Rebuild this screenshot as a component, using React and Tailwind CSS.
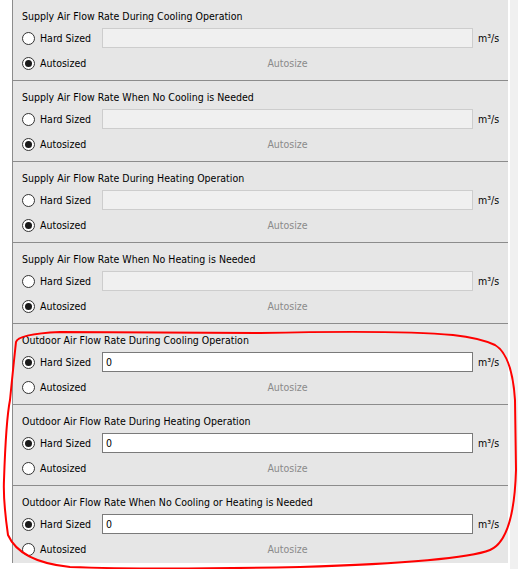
import React from "react";

const sections = [
  { title: "Supply Air Flow Rate During Cooling Operation", hard: false },
  { title: "Supply Air Flow Rate When No Cooling is Needed", hard: false },
  { title: "Supply Air Flow Rate During Heating Operation", hard: false },
  { title: "Supply Air Flow Rate When No Heating is Needed", hard: false },
  { title: "Outdoor Air Flow Rate During Cooling Operation", hard: true },
  { title: "Outdoor Air Flow Rate During Heating Operation", hard: true },
  { title: "Outdoor Air Flow Rate When No Cooling or Heating is Needed", hard: true },
];

function Radio({ checked }) {
  return (
    <span className="w-[13px] h-[13px] rounded-full border border-[#333333] bg-white flex items-center justify-center shrink-0">
      {checked && <span className="w-[7px] h-[7px] rounded-full bg-[#1a1a1a]" />}
    </span>
  );
}

function Section({ title, hard, last }) {
  return (
    <div
      className={
        "shrink-0 pl-[9px] pr-[8px] " +
        (last ? "h-[77px]" : "h-[81px] border-b border-[#8c8c8c]")
      }
    >
      <div className="h-[14px] leading-[14px] mt-[9px] text-black">{title}</div>
      <div className="flex items-center h-[20px] mt-[5px]">
        <div className="flex items-center w-[80px] gap-[5px]">
          <Radio checked={hard} />
          <span className="mt-[1px]">Hard Sized</span>
        </div>
        <div
          className={
            "w-[371px] h-[20px] flex items-center pl-[3px] pt-[1px] " +
            (hard ? "bg-white border border-[#7a7a7a]" : "bg-[#f0f0f0] border border-[#cdcdcd]")
          }
        >
          {hard ? "0" : ""}
        </div>
        <span className="ml-[5px] mt-[1px]">m³/s</span>
      </div>
      <div className="flex items-center h-[20px] mt-[5px]">
        <div className="flex items-center w-[80px] gap-[5px]">
          <Radio checked={!hard} />
          <span className="mt-[1px]">Autosized</span>
        </div>
        <div className="w-[371px] text-center text-[#8a8a8a] mt-[1px]">Autosize</div>
      </div>
    </div>
  );
}

export default function App() {
  return (
    <div
      className="relative w-[518px] h-[569px] overflow-hidden bg-white flex items-start text-[10.5px] text-black"
      style={{ fontFamily: '"DejaVu Sans Condensed", "Liberation Sans", Arial, sans-serif' }}
    >
      <div className="w-[12px] shrink-0 bg-white" />
      <div className="w-[496px] h-[563px] shrink-0 bg-[#e6e6e6] border-l border-[#8c8c8c] flex flex-col overflow-hidden">
        {sections.map((s, i) => (
          <Section key={s.title} {...s} last={i === sections.length - 1} />
        ))}
      </div>
      <div className="w-[2px] shrink-0 bg-white" />
      <div className="flex-1 self-stretch bg-[#f0f0f0]" />
      <svg className="absolute inset-0 pointer-events-none" width="518" height="569" viewBox="0 0 518 569">
        <path
          d="M 60 332 L 260 333 Q 400 330 453 335 Q 480 338 495 345 Q 512 355 515 400 L 516 470 Q 514 540 490 550 Q 460 562 300 567 Q 150 570 70 567 Q 20 562 8 535 Q 3 500 4 480 Q 6 420 10 400 Q 14 360 16 342 Q 18 334 60 332 Z"
          fill="none"
          stroke="#ff0000"
          strokeWidth="2"
        />
      </svg>
    </div>
  );
}
